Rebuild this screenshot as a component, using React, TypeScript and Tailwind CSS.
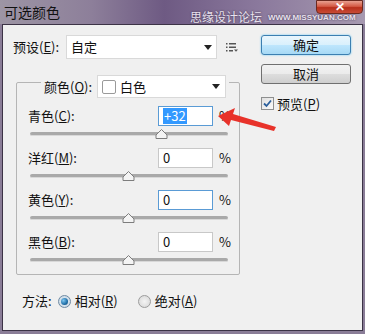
const font = { fontFamily: '"Noto Sans CJK SC", "Liberation Sans", sans-serif' };

function Slider({ pos }: { pos: number }) {
  return (
    <div className="relative h-[10px] mt-[3px] ml-[2px] w-[198px]">
      <div className="absolute left-0 right-0 top-[3px] h-[4px] rounded-full bg-[#a9a9a9] border-b border-[#d8d8d8]" />
      <svg className="absolute top-0" style={{ left: pos - 6 }} width="13" height="10" viewBox="0 0 13 10">
        <path d="M1 9.5 L1 6 L6.5 0.5 L12 6 L12 9.5 Z" fill="#f4f4f4" stroke="#7d7d7d" />
      </svg>
    </div>
  );
}

function Channel({ label, hot, value, pos, focus }: { label: React.ReactNode; hot?: string; value: string; pos: number; focus?: boolean }) {
  return (
    <div className="flex flex-col">
      <div className="flex items-center h-[20px]">
        <span className="w-[130px] text-[13px]">{label}</span>
        <div className={`w-[55px] h-[20px] bg-white border flex items-center pl-[4px] text-[13px] ${focus ? 'border-[#5a9bd5]' : 'border-[#c8c8c8]'}`}>
          {hot ? <span className="bg-[#3399ff] text-white leading-[16px] px-[1px]">{hot}</span> : value}
        </div>
        <span className="ml-[6px] text-[13px]">%</span>
      </div>
      <Slider pos={pos} />
    </div>
  );
}

export default function App() {
  return (
    <div className="w-[365px] h-[334px] relative overflow-hidden text-[#111]" style={font}>
      {/* title bar */}
      <div className="h-[24px] bg-[linear-gradient(90deg,#9d95a4_0%,#8d7f9a_25%,#6e5a83_45%,#8a789c_70%,#a699b0_100%)] flex items-start relative">
        <span className="text-[14px] ml-[4px] mt-[2px] text-[#111]">可选颜色</span>
        <span className="absolute left-[190px] top-[11px] text-[12px] leading-[12px] text-[#e8e2ee]" style={{ textShadow: '0 0 2px #3a2c48' }}>思缘设计论坛</span>
        <span className="absolute left-[268px] top-[14px] text-[8px] leading-[8px] text-[#e8e2ee] font-bold" style={{ fontFamily: '"Liberation Sans", sans-serif', textShadow: '0 0 2px #3a2c48' }}>WWW.MISSYUAN.COM</span>
        <div className="absolute left-[316px] top-0 w-[47px] h-[14px] rounded-b-[4px] bg-[linear-gradient(180deg,#e8a090_0%,#d45a45_45%,#b8301c_55%,#c84a35_100%)] border border-[#6b2a20] flex items-center justify-center text-white font-bold text-[12px] leading-[12px]" style={{ fontFamily: '"Liberation Sans", sans-serif' }}>
          ✕
        </div>
      </div>
      {/* window frame */}
      <div className="absolute left-0 top-[24px] right-0 bottom-0 bg-[#8a7d97] px-[2px] pb-[3px]">
        <div className="w-full h-full bg-[#f0f0f0] border border-[#3c3346] relative">
          <div className="flex pt-[10px] pl-[10px]">
            {/* left column */}
            <div className="w-[238px]">
              <div className="flex items-center h-[24px]">
                <span className="w-[53px] text-[13px]">预设(<span className="underline">E</span>):</span>
                <div className="w-[151px] h-[24px] bg-white border border-[#d9d9d9] flex items-center justify-between pl-[4px] pr-[4px] text-[13px]">
                  自定
                  <svg width="8" height="5" viewBox="0 0 8 5"><path d="M0 0 H8 L4 5Z" fill="#222" /></svg>
                </div>
                <svg className="ml-[9px]" width="12" height="10" viewBox="0 0 12 10">
                  <rect x="0" y="1" width="1.5" height="1.5" fill="#555" />
                  <rect x="3" y="1" width="7" height="1.5" fill="#555" />
                  <rect x="0" y="4.5" width="1.5" height="1.5" fill="#555" />
                  <rect x="3" y="4.5" width="7" height="1.5" fill="#555" />
                  <rect x="0" y="8" width="1.5" height="1.5" fill="#555" />
                  <rect x="3" y="8" width="4" height="1.5" fill="#555" />
                  <path d="M8 7.5 H12 L10 9.8Z" fill="#555" />
                </svg>
              </div>
              {/* group */}
              <div className="relative mt-[23px] ml-[3px] w-[224px] h-[193px] border border-[#b5b5b5] rounded-[2px]">
                <div className="absolute left-[24px] top-[-8px] bg-[#f0f0f0] flex items-center px-[3px]">
                  <span className="text-[13px] mr-[5px]">颜色(<span className="underline">O</span>):</span>
                  <div className="w-[129px] h-[23px] bg-white border border-[#d9d9d9] flex items-center justify-between pl-[4px] pr-[5px] text-[13px]">
                    <span className="flex items-center">
                      <span className="w-[14px] h-[14px] border border-[#9a9a9a] rounded-[2px] bg-white mr-[4px]" />
                      白色
                    </span>
                    <svg width="8" height="5" viewBox="0 0 8 5"><path d="M0 0 H8 L4 5Z" fill="#222" /></svg>
                  </div>
                </div>
                <div className="flex flex-col gap-[9px] pt-[23px] pl-[11px]">
                  <Channel label={<>青色(<span className="underline">C</span>):</>} value="+32" hot="+32" pos={131} focus />
                  <Channel label={<>洋红(<span className="underline">M</span>):</>} value="0" pos={98} />
                  <Channel label={<>黄色(<span className="underline">Y</span>):</>} value="0" pos={98} focus />
                  <Channel label={<>黑色(<span className="underline">B</span>):</>} value="0" pos={98} />
                </div>
              </div>
              <div className="flex items-center mt-[18px] ml-[9px] text-[13px] h-[16px]">
                <span>方法:</span>
                <span className="ml-[6px] w-[13px] h-[13px] rounded-full border border-[#6f8aa3] bg-[radial-gradient(circle,#e9f0f6_0%,#c4d4e2_100%)] flex items-center justify-center">
                  <span className="w-[7px] h-[7px] rounded-full bg-[radial-gradient(circle_at_35%_35%,#7fc6f0_0%,#1f6fa8_60%,#0d3f6b_100%)]" />
                </span>
                <span className="ml-[4px]">相对(<span className="underline">R</span>)</span>
                <span className="ml-[20px] w-[13px] h-[13px] rounded-full border border-[#9c9c9c] bg-[radial-gradient(circle,#f4f4f4_0%,#d5d5d5_100%)]" />
                <span className="ml-[4px]">绝对(<span className="underline">A</span>)</span>
              </div>
            </div>
            {/* right column */}
            <div className="flex flex-col ml-[10px] w-[90px]">
              <button className="h-[20px] rounded-[3px] border border-[#3c7fb1] bg-[linear-gradient(180deg,#eaf6fd_0%,#d9f0fc_50%,#bee6fd_51%,#a7d9f5_100%)] shadow-[0_0_2px_#5cc6f5] text-[13px] leading-[18px]">确定</button>
              <button className="h-[20px] mt-[9px] rounded-[3px] border border-[#707070] bg-[linear-gradient(180deg,#f2f2f2_0%,#ebebeb_50%,#dddddd_51%,#cfcfcf_100%)] text-[13px] leading-[18px]">取消</button>
              <div className="flex items-center mt-[10px] text-[13px]">
                <span className="w-[13px] h-[13px] border border-[#8e8f8f] bg-[linear-gradient(135deg,#e0e0e0,#fafafa)] flex items-center justify-center">
                  <svg width="9" height="9" viewBox="0 0 9 9"><path d="M1 4.5 L3.5 7 L8 1.5" stroke="#2b5f9c" strokeWidth="1.8" fill="none" /></svg>
                </span>
                <span className="ml-[3px]">预览(<span className="underline">P</span>)</span>
              </div>
            </div>
          </div>
        </div>
      </div>
      {/* red arrow annotation */}
      <svg className="absolute left-[214px] top-[108px]" width="80" height="30" viewBox="0 0 80 30">
        <path d="M4 8 L21 0 L19 6 L62 19 L60 23 L17 12 L15 18 Z" fill="#e8322a" />
      </svg>
    </div>
  );
}
